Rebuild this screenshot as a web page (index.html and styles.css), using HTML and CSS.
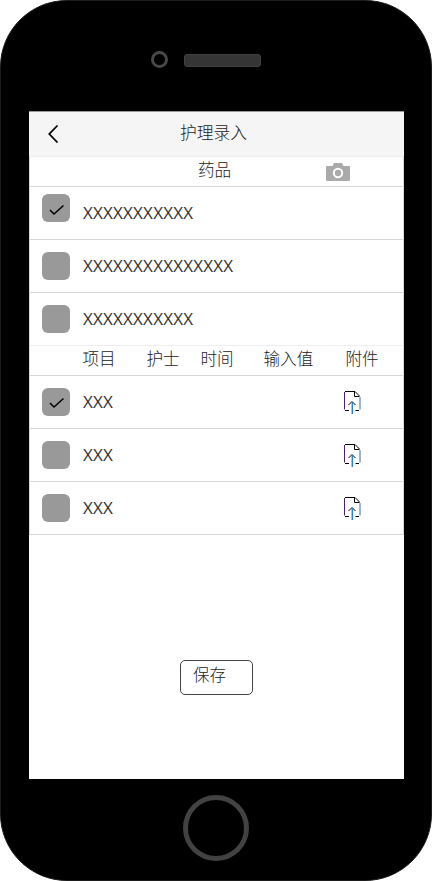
FILE: index.html
```html
<!DOCTYPE html>
<html lang="zh-CN">
<head>
<meta charset="utf-8">
<title>护理录入</title>
<link rel="stylesheet" href="styles.css">
</head>
<body>
<div class="phone">
  <div class="phone-top"><span class="lens"></span><span class="speaker"></span></div>
  <main class="screen">
    <header class="navbar">
      <svg class="back" width="12" height="20" viewBox="0 0 12 20"><path d="M10.500 1.500 2.300 10l8.200 8.500"/></svg>
      <h1>护理录入</h1>
    </header>
    <section class="table">
      <div class="head head-drug">
        <span>药品</span>
        <svg class="camera" width="24" height="18" viewBox="0 0 24 18"><path fill-rule="evenodd" d="M1 3h5.500L8 0h8l1.500 3H23a1 1 0 0 1 1 1v13a1 1 0 0 1-1 1H1a1 1 0 0 1-1-1V4a1 1 0 0 1 1-1ZM12 4.800a5.200 5.200 0 1 0 0 10.400a5.200 5.200 0 0 0 0-10.400Zm0 2a3.200 3.200 0 1 1 0 6.400a3.200 3.200 0 0 1 0-6.400Z"/></svg>
      </div>
      <div class="row"><span class="box raised"><svg class="check" width="28" height="28" viewBox="0 0 28 28"><path d="m8 16 4 4L21.500 11.500"/></svg></span><span class="name">XXXXXXXXXXX</span></div>
      <div class="row"><span class="box"></span><span class="name">XXXXXXXXXXXXXXX</span></div>
      <div class="row last"><span class="box"></span><span class="name">XXXXXXXXXXX</span></div>
      <div class="head head-items"><span>项目</span><span>护士</span><span>时间</span><span>输入值</span><span>附件</span></div>
      <div class="row"><span class="box"><svg class="check" width="28" height="28" viewBox="0 0 28 28"><path d="m8 15 4 4L21.500 10.500"/></svg></span><span class="name">XXX</span>
        <svg class="upload" width="18" height="26" viewBox="0 0 18 26"><path class="right" d="M17 8v12.500"/><path class="left" d="M1.500 3v17.500"/><path d="M2 2.500h10l4.500 4.500M11.500 2.500v5h5M2 21.500h4M12.500 21.500H16M5.500 16 9 12.500l3.500 3.500"/><path class="arrow" d="M9.300 13v12"/></svg></div>
      <div class="row"><span class="box"></span><span class="name">XXX</span>
        <svg class="upload" width="18" height="26" viewBox="0 0 18 26"><path class="right" d="M17 8v12.500"/><path class="left" d="M1.500 3v17.500"/><path d="M2 2.500h10l4.500 4.500M11.500 2.500v5h5M2 21.500h4M12.500 21.500H16M5.500 16 9 12.500l3.500 3.500"/><path class="arrow" d="M9.300 13v12"/></svg></div>
      <div class="row"><span class="box"></span><span class="name">XXX</span>
        <svg class="upload" width="18" height="26" viewBox="0 0 18 26"><path class="right" d="M17 8v12.500"/><path class="left" d="M1.500 3v17.500"/><path d="M2 2.500h10l4.500 4.500M11.500 2.500v5h5M2 21.500h4M12.500 21.500H16M5.500 16 9 12.500l3.500 3.500"/><path class="arrow" d="M9.300 13v12"/></svg></div>
    </section>
    <button class="save" type="button">保存</button>
  </main>
  <div class="phone-bottom"><span class="home"></span></div>
</div>
</body>
</html>
```
FILE: styles.css
```css
* { box-sizing: border-box; }
body {
  margin: 0;
  background: #fff;
  color: #333;
  font: 17px/20px "Open Sans", "Noto Sans CJK SC", sans-serif;
}
svg { display: block; flex: none; fill: none; stroke: #000; }
.phone {
  display: flex;
  flex-direction: column;
  width: 432px;
  height: 881px;
  background: #000;
  border: 1px solid #1c1c1c;
  border-radius: 67px;
}
.phone-top {
  display: flex;
  align-items: flex-start;
  gap: 16px;
  height: 110px;
  padding: 50px 0 0 150px;
}
.lens {
  width: 17px;
  height: 17px;
  border: 3px solid #484848;
  border-radius: 50%;
}
.speaker {
  width: 77px;
  height: 13px;
  margin-top: 3px;
  background: #353535;
  border: 1px solid #404040;
  border-radius: 3px;
}
.screen {
  width: 375px;
  height: 668px;
  margin-left: 28px;
  background: #fff;
}
.navbar {
  display: flex;
  align-items: center;
  height: 45px;
  padding: 0 19px 0 18px;
  background: #f5f5f5;
  border-top: 1px solid #999;
}
.back { stroke-width: 1.800; }
.navbar h1 {
  margin: -5px 0 0 121px;
  color: #222;
  font-family: "Noto Sans CJK SC", sans-serif;
  font-size: 16.800px;
  font-weight: 300;
  line-height: 20px;
}
.table { border: 1px solid #d7d7d7; border-top-color: #eee; }
.head {
  height: 30px;
  padding-top: 2px;
  border-bottom: 1px solid #d7d7d7;
  color: #222;
  font-family: "Noto Sans CJK SC", sans-serif;
  font-size: 16.600px;
  font-weight: 300;
}
.head-drug { display: flex; padding-left: 168px; }
.camera { margin: 4px 0 0 95px; fill: #aaa; stroke: none; }
.head-items {
  display: grid;
  grid-template-columns: 64px 54px 63px 82px auto;
  padding-left: 52.500px;
}
.row {
  display: flex;
  align-items: center;
  height: 53px;
  padding: 0 42px 0 12px;
  border-bottom: 1px solid #d7d7d7;
}
.row:last-child { height: 53px; border-bottom: 0; padding-bottom: 1px; margin-bottom: -1px; }
.last { border-bottom-color: #eee; }
.box {
  flex: none;
  width: 28px;
  height: 28px;
  margin-right: 13px;
  background: #999;
  border-radius: 6px;
}
.raised { margin-bottom: 10px; }
.check { stroke-width: 1.500; }
.name { letter-spacing: .2px; }
.upload { margin-left: auto; }
.left { stroke: #502060; }
.right { stroke: #3a6f94; }
.arrow { stroke: #2884c8; stroke-width: 1.500; }
.save {
  display: block;
  width: 73px;
  height: 35px;
  margin: 125px 0 0 151px;
  padding: 0 0 8px 12px;
  background: #fff;
  border: 1px solid #444;
  border-radius: 5px;
  color: #222;
  font: 300 16.500px/20px "Noto Sans CJK SC", sans-serif;
  text-align: left;
}
.phone-bottom { display: flex; justify-content: center; padding-top: 16px; }
.home {
  width: 66px;
  height: 66px;
  border: 5px solid #424242;
  border-radius: 50%;
}
```
